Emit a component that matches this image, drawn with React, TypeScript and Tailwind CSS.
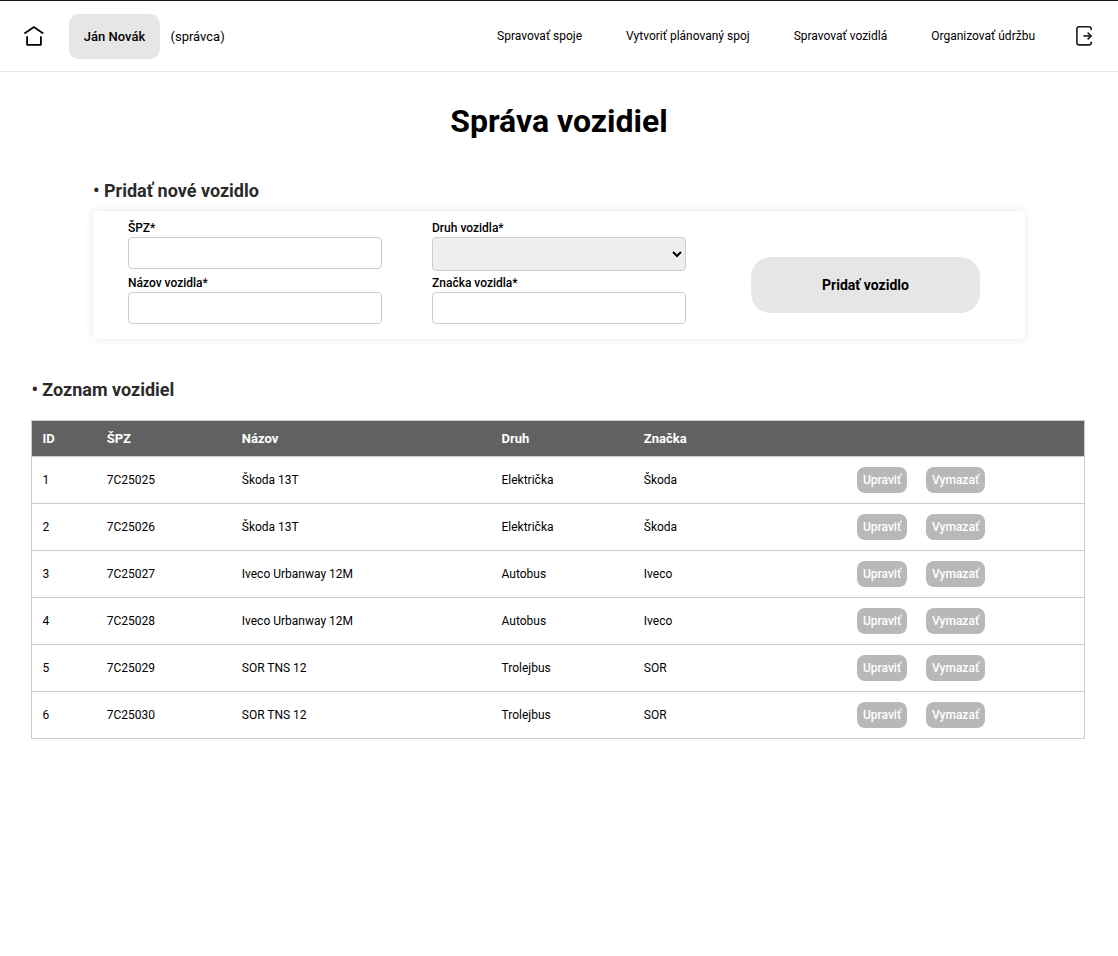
const navLinks = ['Spravovať spoje', 'Vytvoriť plánovaný spoj', 'Spravovať vozidlá', 'Organizovať údržbu'];

const vehicles = [
  { id: 1, plate: '7C25025', name: 'Škoda 13T', kind: 'Električka', brand: 'Škoda' },
  { id: 2, plate: '7C25026', name: 'Škoda 13T', kind: 'Električka', brand: 'Škoda' },
  { id: 3, plate: '7C25027', name: 'Iveco Urbanway 12M', kind: 'Autobus', brand: 'Iveco' },
  { id: 4, plate: '7C25028', name: 'Iveco Urbanway 12M', kind: 'Autobus', brand: 'Iveco' },
  { id: 5, plate: '7C25029', name: 'SOR TNS 12', kind: 'Trolejbus', brand: 'SOR' },
  { id: 6, plate: '7C25030', name: 'SOR TNS 12', kind: 'Trolejbus', brand: 'SOR' },
];

function HomeIcon() {
  return (
    <svg width="22" height="22" viewBox="0 0 22 22" fill="none" stroke="#000" strokeWidth="1.8">
      <path d="M1.4 8.5 10.9 2.1 20.3 8.5" />
      <path d="M4.1 11.2V19.8H17.9V11.2" strokeLinejoin="round" />
    </svg>
  );
}

function ExitIcon() {
  return (
    <svg width="18" height="22" viewBox="0 0 18 22" fill="none" stroke="#1c1c1c" strokeWidth="1.6">
      <path d="M16.2 5V3.9a2.1 2.1 0 0 0-2.1-2.1H4a2.1 2.1 0 0 0-2.1 2.1v13.9a2.1 2.1 0 0 0 2.1 2.1h10.1a2.1 2.1 0 0 0 2.1-2.1v-1.1" />
      <path d="M8.4 10.9H16" />
      <path d="M12.6 7.5 16.1 10.9l-3.5 3.5" />
    </svg>
  );
}

function TextField({ label }: { label: string }) {
  return (
    <label className="block h-[55px]">
      <span className="block h-[17px] text-[12px] leading-[17px] font-medium">{label}</span>
      <input type="text" className="block h-8 w-[254px] rounded border border-[#ccc] bg-white px-2" />
    </label>
  );
}

function SelectField({ label }: { label: string }) {
  return (
    <label className="block h-[55px]">
      <span className="block h-[17px] text-[12px] leading-[17px] font-medium">{label}</span>
      <select className="block h-[34px] w-[254px] rounded border border-[#ccc] bg-[#efefef] text-[13.333px] text-black" />
    </label>
  );
}

export default function App() {
  return (
    <div className="min-h-[956px] border-t border-[#16161a] bg-white font-['Roboto',sans-serif] text-black">
      <header className="flex h-[71px] items-center border-b border-[#e5e5e5] pr-[25px] pl-[23px]">
        <a href="#"><HomeIcon /></a>
        <div className="ml-6 flex h-[45px] w-[91px] items-center justify-center rounded-[10px] bg-[#e6e6e6] pt-px text-[13px] font-medium">
          Ján Novák
        </div>
        <span className="ml-[10.5px] pt-[2px] text-[13px]">(správca)</span>
        <nav className="ml-auto flex gap-11 text-[12px]">
          {navLinks.map((link) => (
            <a key={link} href="#">{link}</a>
          ))}
        </nav>
        <a href="#" className="ml-10"><ExitIcon /></a>
      </header>

      <h1 className="mt-[30px] text-center text-[32px] leading-[38px] font-bold">Správa vozidiel</h1>

      <section className="mx-[93px] mt-10">
        <h2 className="h-[31px] text-[18px] leading-[21px] font-bold text-[#2b2b2b]">• Pridať nové vozidlo</h2>
        <form className="flex h-[128px] rounded-[3px] bg-white pt-[9px] pl-[35px] shadow-[0_0_10px_rgba(0,0,0,0.1)]">
          <div className="grid grid-cols-[254px_254px] content-start gap-x-[50px]">
            <TextField label="ŠPZ*" />
            <SelectField label="Druh vozidla*" />
            <TextField label="Názov vozidla*" />
            <TextField label="Značka vozidla*" />
          </div>
          <button type="button" className="mt-[37px] ml-[65px] h-14 w-[229px] rounded-[20px] bg-[#e6e6e6] text-[14px] font-bold">
            Pridať vozidlo
          </button>
        </form>
      </section>

      <section className="mt-10 ml-[31px]">
        <h2 className="h-[41px] pl-[0.4px] text-[18px] leading-[21px] font-bold text-[#2b2b2b]">• Zoznam vozidiel</h2>
        <table className="w-[1054px] table-fixed border-collapse border border-[#ccc] text-left text-[12px]">
          <colgroup>
            <col className="w-[65px]" />
            <col className="w-[135px]" />
            <col className="w-[260px]" />
            <col className="w-[142px]" />
            <col className="w-[213px]" />
            <col />
          </colgroup>
          <thead>
            <tr className="h-9 border-b border-[#ccc] bg-[#616161] text-[13px] text-white">
              <th className="pl-[10.5px] font-bold">ID</th>
              <th className="pl-[10.3px] font-bold">ŠPZ</th>
              <th className="pl-[10.25px] font-bold">Názov</th>
              <th className="pl-[10px] font-bold">Druh</th>
              <th className="pl-[10.3px] font-bold">Značka</th>
              <th />
            </tr>
          </thead>
          <tbody>
            {vehicles.map((v) => (
              <tr key={v.id} className="h-[47px] border-b border-[#ccc]">
                <td className="pl-[10.5px]">{v.id}</td>
                <td className="pl-[10.3px]">{v.plate}</td>
                <td className="pl-[10.25px]">{v.name}</td>
                <td className="pl-[10px]">{v.kind}</td>
                <td className="pl-[10.3px]">{v.brand}</td>
                <td className="pl-[10.5px]">
                  <div className="flex gap-[19px] font-medium text-white">
                    <button type="button" className="h-[26px] w-[50px] rounded-lg bg-[#b8b8b8]">Upraviť</button>
                    <button type="button" className="h-[26px] w-[59px] rounded-lg bg-[#b8b8b8]">Vymazať</button>
                  </div>
                </td>
              </tr>
            ))}
          </tbody>
        </table>
      </section>
    </div>
  );
}
